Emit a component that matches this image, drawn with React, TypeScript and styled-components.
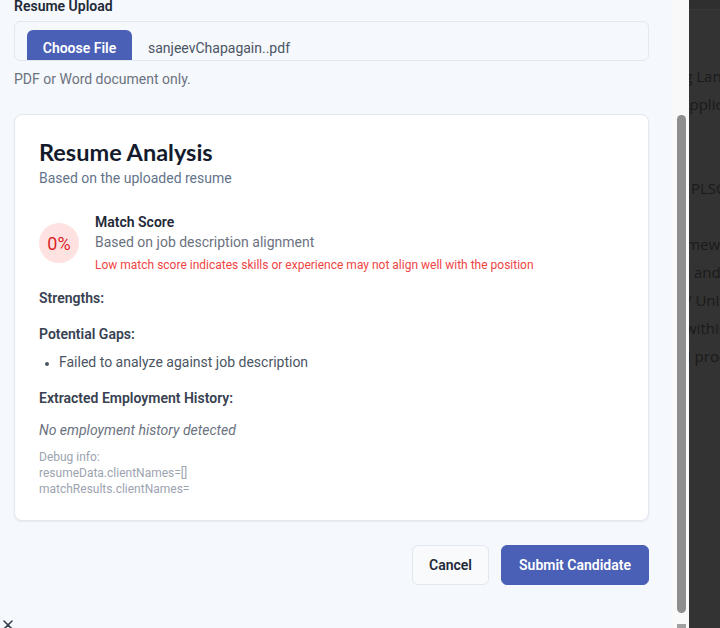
import React from "react";
import styled, { createGlobalStyle } from "styled-components";

const GlobalStyle = createGlobalStyle`
  html, body { margin: 0; padding: 0; }
  body {
    font-family: Roboto, "Noto Sans", "Liberation Sans", sans-serif;
    -webkit-font-smoothing: antialiased;
  }
  * { box-sizing: border-box; }
`;

const Screen = styled.div`
  display: flex;
  width: 720px;
  height: 628px;
  overflow: hidden;
`;

const Panel = styled.div`
  width: 673px;
  flex: none;
  background: #f5f8fc;
  overflow: hidden;
`;

const Content = styled.div`
  display: flex;
  flex-direction: column;
  padding: 0 24px 0 14px;
  margin-top: -4px;
`;

const FieldLabel = styled.div`
  font-size: 14px;
  line-height: 20px;
  font-weight: 600;
  color: #1f2937;
`;

const FileBox = styled.div`
  margin-top: 5px;
  height: 40px;
  border: 1px solid #e2e8f0;
  border-radius: 6px;
  background: #f5f8fc;
  overflow: hidden;
  display: flex;
  align-items: flex-start;
  padding: 8px 12px 0;
  gap: 16px;
`;

const ChooseButton = styled.div`
  width: 105px;
  height: 36px;
  flex: none;
  background: #4a60b6;
  border-radius: 6px;
  color: #fff;
  font-size: 14px;
  font-weight: 600;
  display: flex;
  align-items: center;
  justify-content: center;
`;

const FileName = styled.div`
  font-size: 14px;
  line-height: 20px;
  color: #4b5563;
  padding-top: 8px;
`;

const Help = styled.div`
  margin-top: 8px;
  font-size: 14px;
  line-height: 20px;
  color: #6b7280;
`;

const Card = styled.div`
  margin-top: 25px;
  background: #fff;
  border: 1px solid #e2e8f0;
  border-radius: 8px;
  box-shadow: 0 1px 2px rgba(15, 23, 42, 0.06);
  padding: 24px 24px 23px;
  display: flex;
  flex-direction: column;
`;

const Title = styled.h2`
  margin: 0;
  font-family: Lato, Roboto, sans-serif;
  font-size: 23.5px;
  line-height: 26px;
  font-weight: 700;
  color: #141b2d;
`;

const Subtitle = styled.div`
  margin-top: 3px;
  font-size: 14px;
  line-height: 20px;
  color: #64748b;
`;

const ScoreRow = styled.div`
  margin-top: 24px;
  display: flex;
  align-items: center;
  gap: 16px;
`;

const ScoreBadge = styled.div`
  width: 40px;
  height: 40px;
  flex: none;
  border-radius: 50%;
  background: #fee2e2;
  color: #dc2626;
  font-size: 18px;
  display: flex;
  align-items: center;
  justify-content: center;
`;

const ScoreText = styled.div`
  display: flex;
  flex-direction: column;
`;

const ScoreTitle = styled.div`
  font-size: 14px;
  line-height: 20px;
  font-weight: 600;
  color: #1f2937;
`;

const ScoreDesc = styled.div`
  font-size: 14px;
  line-height: 20px;
  color: #6b7280;
`;

const Warning = styled.div`
  margin-top: 4px;
  font-size: 12px;
  line-height: 18px;
  color: #ef4444;
`;

const SectionTitle = styled.div<{ $gap: number }>`
  margin-top: ${(p) => p.$gap}px;
  font-size: 14px;
  line-height: 20px;
  font-weight: 600;
  color: #374151;
`;

const List = styled.ul`
  margin: 8px 0 0;
  padding: 0 0 0 20px;
`;

const ListItem = styled.li`
  font-size: 14px;
  line-height: 20px;
  color: #4b5563;
  &::marker { color: #4b5563; font-size: 12px; }
`;

const Empty = styled.div`
  margin-top: 12px;
  font-size: 14px;
  line-height: 20px;
  font-style: italic;
  color: #6b7280;
`;

const Debug = styled.div`
  margin-top: 9px;
  font-size: 12px;
  line-height: 16px;
  color: #9ca3af;
`;

const Actions = styled.div`
  margin-top: 24px;
  display: flex;
  justify-content: flex-end;
  gap: 12px;
`;

const Button = styled.button<{ $primary?: boolean }>`
  height: 40px;
  padding: 0 16px;
  border-radius: 6px;
  font-family: inherit;
  font-size: 14px;
  font-weight: 600;
  border: 1px solid ${(p) => (p.$primary ? "#4a60b6" : "#e2e8f0")};
  background: ${(p) => (p.$primary ? "#4a60b6" : "#f8fafc")};
  color: ${(p) => (p.$primary ? "#ffffff" : "#1f2937")};
  width: ${(p) => (p.$primary ? "148px" : "77px")};
`;

const CloseRow = styled.div`
  margin-top: 33px;
  margin-left: -13px;
  color: #374151;
  display: flex;
`;

const ScrollTrack = styled.div`
  width: 16px;
  flex: none;
  background: #f9f9f9;
  display: flex;
  flex-direction: column;
  align-items: center;
  padding-left: 1px;
`;

const ScrollThumb = styled.div`
  margin-top: 115px;
  width: 9px;
  height: 500px;
  border-radius: 5px;
  background: #8e8e8e;
`;

const ScrollArrow = styled.div`
  margin-top: 11px;
  width: 9px;
  height: 4px;
  background: #a0a0a0;
`;

const Backdrop = styled.div`
  flex: 1;
  background: #333333;
  overflow: hidden;
  display: flex;
  flex-direction: column;
`;

const BackdropBar = styled.div`
  height: 10px;
  background: #2f2f2f;
  border-bottom: 1px solid #3a3a3a;
`;

const BackdropText = styled.div`
  margin-top: 52px;
  font-family: "Open Sans", "Noto Sans", sans-serif;
  font-size: 15px;
  line-height: 28px;
  color: #1a1a1a;
  white-space: nowrap;
`;

const BackLine = styled.div<{ $shift: number }>`
  height: 28px;
  margin-left: ${(p) => p.$shift}px;
`;

const backLines: [string, number][] = [
  ["ng Languages", -14],
  ["Applications", -9],
  ["", 0],
  ["", 0],
  ["PLSQL", 2],
  ["", 0],
  ["Frameworks", -25],
  ["Tool and", -29],
  ["/ Unix", -3],
  ["within", -4],
  ["and process", -25],
];

export default function App() {
  return (
    <>
      <GlobalStyle />
      <Screen>
        <Panel>
          <Content>
            <FieldLabel>Resume Upload</FieldLabel>
            <FileBox>
              <ChooseButton>Choose File</ChooseButton>
              <FileName>sanjeevChapagain..pdf</FileName>
            </FileBox>
            <Help>PDF or Word document only.</Help>

            <Card>
              <Title>Resume Analysis</Title>
              <Subtitle>Based on the uploaded resume</Subtitle>
              <ScoreRow>
                <ScoreBadge>0%</ScoreBadge>
                <ScoreText>
                  <ScoreTitle>Match Score</ScoreTitle>
                  <ScoreDesc>Based on job description alignment</ScoreDesc>
                  <Warning>
                    Low match score indicates skills or experience may not align well with the position
                  </Warning>
                </ScoreText>
              </ScoreRow>
              <SectionTitle $gap={14}>Strengths:</SectionTitle>
              <SectionTitle $gap={16}>Potential Gaps:</SectionTitle>
              <List>
                <ListItem>Failed to analyze against job description</ListItem>
              </List>
              <SectionTitle $gap={16}>Extracted Employment History:</SectionTitle>
              <Empty>No employment history detected</Empty>
              <Debug>
                Debug info:
                <br />
                resumeData.clientNames=[]
                <br />
                matchResults.clientNames=
              </Debug>
            </Card>

            <Actions>
              <Button>Cancel</Button>
              <Button $primary>Submit Candidate</Button>
            </Actions>

            <CloseRow>
              <svg width="14" height="14" viewBox="0 0 14 14" fill="none">
                <path d="M3 3L11 11M11 3L3 11" stroke="currentColor" strokeWidth="1.6" strokeLinecap="round" />
              </svg>
            </CloseRow>
          </Content>
        </Panel>
        <ScrollTrack>
          <ScrollThumb />
          <ScrollArrow />
        </ScrollTrack>
        <Backdrop>
          <BackdropBar />
          <BackdropText>
            {backLines.map(([t, s], i) => (
              <BackLine key={i} $shift={s}>
                {t}
              </BackLine>
            ))}
          </BackdropText>
        </Backdrop>
      </Screen>
    </>
  );
}
